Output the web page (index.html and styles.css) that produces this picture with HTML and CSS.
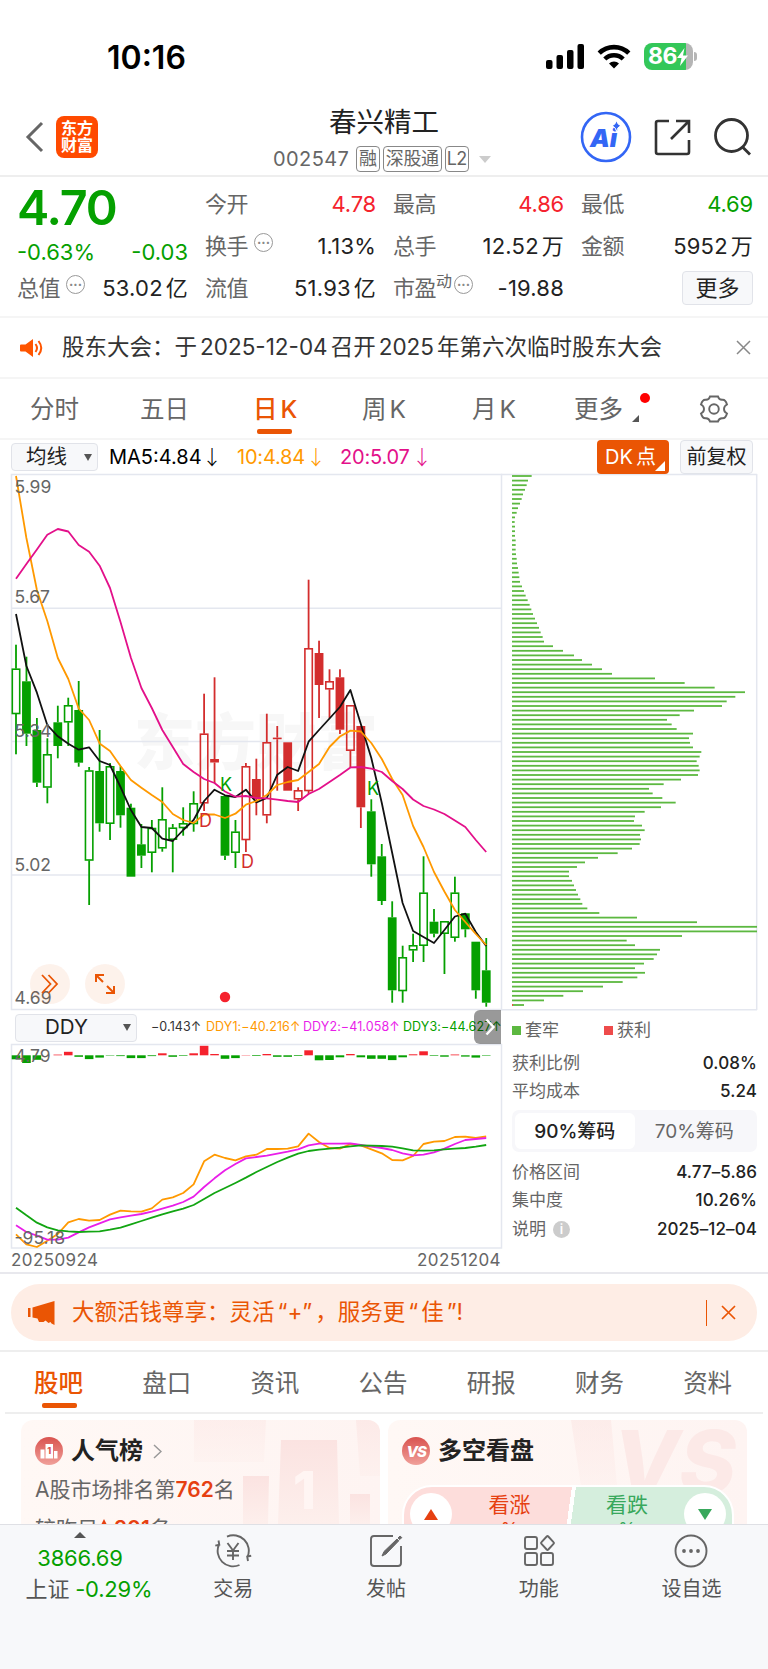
FILE: index.html
```html
<!DOCTYPE html>
<html lang="zh-CN">

<head>
  <meta charset="utf-8">
  <title>春兴精工 002547</title>
  <link rel="stylesheet" href="styles.css">
</head>

<body>
  <div class="status">
    <span class="time">10:16</span>
    <div class="status-icons">
      <svg class="signal" width="39" height="25" viewBox="0 0 39 25">
        <rect x="0" y="16" width="6.5" height="9" rx="2" />
        <rect x="10.5" y="11" width="6.5" height="14" rx="2" />
        <rect x="21" y="6" width="6.5" height="19" rx="2" />
        <rect x="31.5" y="0" width="6.5" height="25" rx="2" />
      </svg>
      <svg class="wifi" width="34" height="25" viewBox="0 0 34 25">
        <path d="M2.2 9.2a21 21 0 0 1 29.6 0" fill="none" stroke="#000" stroke-width="4.6" />
        <path d="M7.8 15a13 13 0 0 1 18.4 0" fill="none" stroke="#000" stroke-width="4.4" />
        <path d="M17 24.5l-5-5a7 7 0 0 1 10 0z" />
      </svg>
      <div class="battery">
        <span>86</span>
        <svg width="11" height="18" viewBox="0 0 11 18"><path d="M7.5 0L0 10h4.5L3 18l8-10.5H6z" fill="#fff" /></svg>
      </div>
      <i class="nub"></i>
    </div>
  </div>

  <div class="header">
    <div class="left">
      <svg width="20" height="32" viewBox="0 0 20 32"><path d="M17 2L3 16l14 14" fill="none" stroke="#666" stroke-width="3" /></svg>
      <div class="logo">东方<br>财富</div>
    </div>
    <div class="stock">
      <h1>春兴精工</h1>
      <div class="code">
        <span class="num">002547</span>
        <span class="tag">融</span>
        <span class="tag">深股通</span>
        <span class="tag">L2</span>
        <i class="caret"></i>
      </div>
    </div>
    <div class="right">
      <svg width="52" height="52" viewBox="0 0 52 52">
        <circle cx="26" cy="26" r="24" fill="#fff" stroke="#3366f5" stroke-width="2.6" />
        <text x="10" y="35.5" class="ai">Ai</text>
        <path d="M36.5 9.5q.8 4 4.5 5.3q-3.7 1.3-4.5 5.3q-.8-4-4.500-5.300q3.700-1.300 4.500-5.300z" fill="#3366f5" stroke="#fff" stroke-width="1" />
      </svg>
      <svg class="share" width="38" height="38" viewBox="0 0 38 38" fill="none" stroke="#333" stroke-width="2.6">
        <path d="M15 2H4q-2 0-2 2v29q0 2 2 2h29q2 0 2-2V21M22 2h13v12M35 2L17 20" />
      </svg>
      <svg class="search" width="40" height="40" viewBox="0 0 40 40" fill="none" stroke="#333" stroke-width="2.8">
        <circle cx="18.5" cy="18.5" r="16" />
        <path d="M29.500 30l7.500 7.500" />
      </svg>
    </div>
  </div>

  <div class="quote">
    <div class="col main">
      <div class="price">4.70</div>
      <div class="row change down"><span>-0.63%</span><span>-0.03</span></div>
      <div class="row"><label>总值</label><i class="more-dot">···</i><b>53.02<u>亿</u></b></div>
    </div>
    <div class="col">
      <div class="row"><label>今开</label><b class="up">4.78</b></div>
      <div class="row"><label>换手</label><i class="more-dot">···</i><b>1.13%</b></div>
      <div class="row"><label>流值</label><b>51.93<u>亿</u></b></div>
    </div>
    <div class="col">
      <div class="row"><label>最高</label><b class="up">4.86</b></div>
      <div class="row"><label>总手</label><b>12.52<u>万</u></b></div>
      <div class="row"><label>市盈</label><sup>动</sup><i class="more-dot tight">···</i><b>-19.88</b></div>
    </div>
    <div class="col">
      <div class="row"><label>最低</label><b class="down">4.69</b></div>
      <div class="row"><label>金额</label><b>5952<u>万</u></b></div>
      <div class="row"><button class="btn more">更多</button></div>
    </div>
  </div>

  <div class="news">
    <svg width="24" height="20" viewBox="0 0 24 20">
      <path d="M1 6.500h4.500L13 1v18l-7.500-5.500H1q-1 0-1-1v-5q0-1 1-1z" fill="#ff5500" />
      <path d="M15.500 6q3 4 0 8M18.500 3q5.500 7 0 14" fill="none" stroke="#ff5500" stroke-width="2" />
    </svg>
    <p>股东大会：于<em>2025-12-04</em>召开<em>2025</em>年第六次临时股东大会</p>
    <svg class="close" width="15" height="15" viewBox="0 0 15 15"><path d="M1 1l13 13M14 1L1 14" stroke="#888" stroke-width="1.5" /></svg>
  </div>

  <div class="periods">
    <span>分时</span>
    <span>五日</span>
    <span class="active">日<em>K</em></span>
    <span>周<em>K</em></span>
    <span>月<em>K</em></span>
    <span class="more-tab">更多<i class="corner"></i><i class="red-dot"></i></span>
    <svg width="30" height="30" viewBox="0 0 30 30" fill="none" stroke="#666" stroke-width="1.9">
      <path d="M11 2.500h8q1 3.500 4.500 3.200q3-.3 4.500 4.800q-3 1.500-3 4.500t3 4.500q-1.500 5.100-4.500 4.800q-3.500-.3-4.500 3.200h-8q-1-3.500-4.500-3.200q-3 .3-4.500-4.800q3-1.500 3-4.500t-3-4.500q1.500-5.100 4.500-4.800q3.500 .3 4.500-3.200z" />
      <circle cx="15" cy="15" r="4.8" />
    </svg>
  </div>

  <div class="ma-bar">
    <div class="btn select">均线<i class="arrow"></i></div>
    <span class="ma ma5">MA5:4.84<i>↓</i></span>
    <span class="ma ma10">10:4.84<i>↓</i></span>
    <span class="ma ma20">20:5.07<i>↓</i></span>
    <div class="btn dk">DK<em>点</em></div>
    <div class="btn fq">前复权</div>
  </div>

  <div class="charts">
    <div class="kline">
      <svg id="kline" width="491" height="536" viewBox="11 474 491 536"></svg>
      <div class="chart-tools">
        <span class="tool"><svg width="18" height="20" viewBox="0 0 18 20" fill="none" stroke="#ea5504" stroke-width="1.8"><path d="M1 1l8.500 9L1 19M7.500 1l8.500 9l-8.500 9" /></svg></span>
        <span class="tool"><svg width="20" height="20" viewBox="0 0 20 20" fill="none" stroke="#ea5504" stroke-width="2"><path d="M1 8V1h8M1 1l7 7M19 12v7h-8M19 19l-7-7" /></svg></span>
      </div>
      <div class="ddy-bar">
        <div class="btn select ddy">DDY<i class="arrow"></i></div>
        <span class="v0">−0.143<i>↑</i></span>
        <span class="v1">DDY1:−40.216<i>↑</i></span>
        <span class="v2">DDY2:−41.058<i>↑</i></span>
        <span class="v3">DDY3:−44.627<i>↑</i></span>
        <div class="next"><svg width="10" height="18" viewBox="0 0 10 18"><path d="M1.500 1.500L8.500 9l-7 7.500" fill="none" stroke="#fff" stroke-width="2.4" /></svg></div>
      </div>
      <svg id="ddy" width="491" height="205" viewBox="11 1044 491 205"></svg>
      <div class="dates"><span>20250924</span><span>20251204</span></div>
    </div>

    <div class="chips">
      <svg id="chips" width="257" height="536" viewBox="501 474 257 536"></svg>
      <div class="chip-info">
        <div class="legend"><i class="sq green"></i>套牢<i class="sq red"></i>获利</div>
        <div class="line l1"><span>获利比例</span><b>0.08%</b></div>
        <div class="line l2"><span>平均成本</span><b>5.24</b></div>
        <div class="toggle"><span class="on">90%筹码</span><span>70%筹码</span></div>
        <div class="line l3"><span>价格区间</span><b>4.77–5.86</b></div>
        <div class="line l4"><span>集中度</span><b>10.26%</b></div>
        <div class="line l5"><span>说明</span><i class="info">i</i><b>2025–12–04</b></div>
      </div>
    </div>
  </div>

  <div class="banner-wrap">
    <div class="banner">
      <svg width="27" height="24" viewBox="0 0 27 24" fill="#ea5504">
        <path d="M0 7h2.500v9H0zM4.500 6.500L26.500 0v24l-3-1.500-1-1.500-2 1-3-2.500-2 1.500H11l-1.500-3.500-5-1z" />
      </svg>
      <p>大额活钱尊享：灵活<em>“+”</em>，服务更<em>“</em>佳<em>”!</em></p>
      <i class="bar"></i>
      <svg width="15" height="15" viewBox="0 0 15 15"><path d="M1 1l13 13M14 1L1 14" stroke="#ea5504" stroke-width="1.7" /></svg>
    </div>
  </div>

  <div class="sections">
    <span class="active">股吧</span>
    <span>盘口</span>
    <span>资讯</span>
    <span>公告</span>
    <span>研报</span>
    <span>财务</span>
    <span>资料</span>
  </div>

  <div class="cards">
    <div class="card">
      <svg class="deco" width="190" height="104" viewBox="0 0 190 104">
        <defs>
          <linearGradient id="fade" x1="0" y1="0" x2="0" y2="1">
            <stop offset="0" stop-color="#fbe3e1" />
            <stop offset="1" stop-color="#fdefec" />
          </linearGradient>
        </defs>
        <g fill="url(#fade)">
          <path d="M4 0h72l-2 42H4z" opacity=".4" />
          <path d="M91 20h56l2 84H88z" />
          <path d="M53 56h26l-1 48H53z" />
          <path d="M160 74h20v30h-20z" />
          <path d="M166 0h24v56h-20z" opacity=".6" />
        </g>
        <text x="103" y="89" class="deco-one">1</text>
      </svg>
      <div class="card-head">
        <svg width="28" height="28" viewBox="0 0 28 28">
          <defs>
            <linearGradient id="badge" x1="0" y1="0" x2="0" y2="1">
              <stop offset="0" stop-color="#d9534f" />
              <stop offset="1" stop-color="#f0a09a" />
            </linearGradient>
          </defs>
          <circle cx="14" cy="14" r="14" fill="url(#badge)" />
          <path d="M5.500 12.500h4v9h-4zM10.500 7h7.500v14.500h-7.500zM19 14h3.500v7.500H19z" fill="#fff" />
          <text x="12.3" y="17" class="badge-one">1</text>
        </svg>
        <h2>人气榜</h2>
        <svg class="chev" width="9" height="15" viewBox="0 0 9 15"><path d="M1 1l7 6.500L1 14" fill="none" stroke="#999" stroke-width="1.5" /></svg>
      </div>
      <p>A股市场排名第<b>762</b>名</p>
      <p class="second">较昨日<i class="tri"></i><b>201</b>名</p>
    </div>

    <div class="card">
      <svg class="deco" width="180" height="104" viewBox="0 0 180 104">
        <path d="M4 0h40l6 66H14z" fill="url(#fade)" opacity=".5" />
        <text x="46" y="73" class="deco-vs">VS</text>
      </svg>
      <div class="card-head">
        <svg width="28" height="28" viewBox="0 0 28 28">
          <circle cx="14" cy="14" r="14" fill="url(#badge)" />
          <text x="4.5" y="20" class="badge-vs">VS</text>
        </svg>
        <h2>多空看盘</h2>
      </div>
      <div class="vote">
        <div class="rise"><span class="knob"><i class="tri"></i></span><div>看涨<small>%</small></div></div>
        <div class="fall"><div>看跌<small>%</small></div><span class="knob"><i class="tri"></i></span></div>
      </div>
    </div>
  </div>

  <div class="nav">
    <div class="index">
      <i class="tri"></i>
      <span class="down">3866.69</span>
      <span class="name">上证 <em class="down">-0.29%</em></span>
    </div>
    <div class="item">
      <svg width="38" height="34" viewBox="0 0 38 34" fill="none" stroke="#666" stroke-width="1.9">
        <path d="M13 2.600A15.500 15.500 0 0 1 33.500 23M34 27l-.8-4.500l4-.8M25.500 31A15.500 15.500 0 0 1 5 10.500M4.500 6.500l.8 4.300l-4 .8" />
        <path d="M13.500 9l5.500 7.500L24.500 9M19 16.500V26M13 17h12M13 21.500h12" />
      </svg>
      <span>交易</span>
    </div>
    <div class="item">
      <svg width="34" height="34" viewBox="0 0 34 34" fill="none" stroke="#666" stroke-width="1.9">
        <path d="M24 2H5Q2 2 2 5v24q0 3 3 3h24q3 0 3-3V12" />
        <path d="M13 22l2-4.500L28 5l1.800 1.800L17 20zM29 4l2-2l1.800 1.600l-2 2z" fill="#666" stroke-width="1" />
      </svg>
      <span>发帖</span>
    </div>
    <div class="item">
      <svg width="32" height="34" viewBox="0 0 32 34" fill="none" stroke="#666" stroke-width="1.9">
        <rect x="2" y="3" width="12" height="12" rx="2" />
        <rect x="2" y="19" width="12" height="12" rx="2" />
        <rect x="18" y="19" width="12" height="12" rx="2" />
        <path d="M23.700 2.500q.8-.8 1.600 0l5.200 5.700q.8 .8 0 1.600l-5.200 5.700q-.8 .8-1.600 0l-5.200-5.700q-.8-.8 0-1.600z" />
      </svg>
      <span>功能</span>
    </div>
    <div class="item">
      <svg width="34" height="34" viewBox="0 0 34 34">
        <circle cx="17" cy="17" r="15.5" fill="none" stroke="#666" stroke-width="1.9" />
        <g fill="#666"><circle cx="10" cy="17" r="1.9" /><circle cx="17" cy="17" r="1.9" /><circle cx="24" cy="17" r="1.9" /></g>
      </svg>
      <span>设自选</span>
    </div>
  </div>

  <script src="chart.js"></script>
</body>

</html>
```
FILE: styles.css
```css
* {
  box-sizing: border-box;
}

body {
  margin: 0;
  width: 768px;
  height: 1669px;
  overflow: hidden;
  background: #fff;
  color: #333;
  font-family: Inter, "Noto Sans CJK SC", sans-serif;
  font-size: 22px;
  line-height: 1;
  white-space: nowrap;
}

h1, h2, p {
  margin: 0;
  font-weight: 400;
}

i, em, u {
  font-style: normal;
  text-decoration: none;
}

svg {
  display: block;
  flex: none;
}

.up {
  color: #f5222d !important;
}

.down {
  color: #05a000 !important;
}

.btn {
  display: flex;
  align-items: center;
  justify-content: center;
  flex: none;
  background: #f7f8fa;
  border: 1px solid #e1e3e9;
  border-radius: 4px;
  color: #222;
  font-family: inherit;
  padding: 0;
  line-height: 1;
}

/* status bar */
.status {
  height: 96px;
  display: flex;
  justify-content: space-between;
  padding: 43px 71px 0 107px;
}

.time {
  font-size: 32px;
  font-weight: 600;
  color: #000;
  line-height: 29px;
}

.status-icons {
  display: flex;
  align-items: center;
  height: 27px;
}

.wifi {
  margin: 0 13px 0 12px;
}

.battery {
  width: 49px;
  height: 27px;
  border-radius: 8px;
  background: linear-gradient(90deg, #34c759 86%, #b5b5b5 86%);
  display: flex;
  align-items: center;
  padding-left: 4px;
  color: #fff;
  font-size: 23px;
  font-weight: 700;
  letter-spacing: -0.5px;
}

.nub {
  width: 3px;
  height: 9px;
  margin-left: 1px;
  border-radius: 0 3px 3px 0;
  background: #b5b5b5;
}

/* header */
.header {
  height: 81px;
  display: grid;
  grid-template-columns: 1fr 240px 1fr;
  border-bottom: 2px solid #eee;
}

.left {
  display: flex;
  align-items: center;
  padding: 2px 0 0 25px;
}

.logo {
  width: 42px;
  height: 42px;
  margin-left: 11px;
  border-radius: 8px;
  background: #ff4a00;
  color: #fff;
  font-size: 16px;
  font-weight: 700;
  line-height: 17px;
  text-align: center;
  padding-top: 4px;
}

.stock h1 {
  font-size: 27.5px;
  line-height: 27px;
  color: #222;
  text-align: center;
  margin-top: 13px;
}

.code {
  display: flex;
  align-items: center;
  margin: 9px 0 0 9px;
  height: 28px;
  color: #666;
  font-size: 20px;
}

.code .num {
  width: 83px;
  letter-spacing: 0.4px;
}

.tag {
  border: 1.5px solid #888;
  border-radius: 4px;
  font-size: 18px;
  height: 26px;
  line-height: 23px;
  padding: 0 2px;
  margin-right: 3px;
  letter-spacing: -0.3px;
}

.tag:nth-child(4) {
  width: 24px;
  padding: 0 1px;
  letter-spacing: -0.8px;
}

.caret {
  margin-left: 7px;
  border: 6px solid transparent;
  border-top: 7px solid #ccc;
  border-bottom: 0;
}

.right {
  display: flex;
  align-items: center;
  justify-content: flex-end;
  padding: 2px 17px 0 0;
}

.ai {
  font: italic 900 25px Inter, sans-serif;
  fill: #3366f5;
}

.share {
  margin: 2px 21px 0 22px;
}

.search {
  margin-right: -2px;
}

/* quote */
.quote {
  height: 141px;
  display: grid;
  grid-template-columns: 171px 171px 171px 172px;
  column-gap: 17px;
  padding: 6px 0 0 17px;
  border-bottom: 2px solid #f5f5f5;
}

.row {
  display: flex;
  align-items: center;
  height: 42px;
}

.row b {
  margin-left: auto;
  font-weight: 400;
  color: #222;
  letter-spacing: 0.2px;
}

.row .up,
.row .down {
  letter-spacing: -0.2px;
}

.row u {
  margin-left: 3px;
}

.row label {
  color: #666;
  letter-spacing: -0.5px;
}

.price {
  height: 48px;
  color: #05a000;
  font-size: 48.5px;
  font-weight: 600;
  line-height: 49px;
  letter-spacing: -1.2px;
}

.change {
  justify-content: space-between;
  height: 42px;
}

.main .row:last-child {
  height: 30px;
}

.row sup {
  font-size: 16px;
  color: #666;
  line-height: 1;
  align-self: flex-start;
  margin-top: 6px;
}

.more-dot {
  width: 19px;
  height: 19px;
  margin: -8px 0 0 6px;
  border: 1.5px solid #999;
  border-radius: 50%;
  color: #888;
  font-size: 13px;
  font-weight: 700;
  line-height: 16px;
  text-align: center;
  letter-spacing: 0;
}

.more-dot.tight {
  margin-left: 2px;
}

.more {
  width: 71px;
  height: 34px;
  margin-left: auto;
  font-size: 22px;
}

/* news */
.news {
  height: 61px;
  display: flex;
  align-items: center;
  padding: 0 17px 0 20px;
  border-bottom: 2px solid #f5f5f5;
}

.news p {
  margin-left: 18px;
  font-size: 22.5px;
}

.news em {
  margin: 0 3px;
}

.close {
  margin-left: auto;
}

/* period tabs */
.periods {
  height: 61px;
  display: flex;
  align-items: center;
  padding: 1px 0 0 30px;
  border-bottom: 2px solid #f5f5f5;
  color: #666;
  font-size: 24.5px;
}

.periods span {
  width: 110px;
  flex: none;
}

.periods em {
  margin-left: 3px;
}

.periods .active {
  color: #ea5504;
  font-weight: 500;
  position: relative;
}

.periods span:nth-child(3) {
  margin-left: 3px;
}

.periods span:nth-child(4) {
  margin-left: -1px;
}

.periods .more-tab {
  width: 125px;
  margin-left: -8px;
  position: relative;
}

.periods .active::after,
.sections .active::after {
  content: "";
  position: absolute;
  left: 4px;
  bottom: -13px;
  width: 35px;
  height: 5px;
  border-radius: 2px;
  background: #ea5504;
}

.corner {
  position: absolute;
  left: 58px;
  bottom: -1px;
  border-left: 7px solid transparent;
  border-bottom: 7px solid #555;
}

.red-dot {
  position: absolute;
  left: 66px;
  top: -4px;
  width: 10px;
  height: 10px;
  border-radius: 50%;
  background: #f00;
}

/* moving averages */
.ma-bar {
  height: 34px;
  display: flex;
  align-items: center;
  padding: 0 15px 0 11px;
  font-size: 20px;
}

.select {
  width: 87px;
  height: 28px;
  font-size: 20.5px;
  justify-content: flex-end;
  padding-right: 5px;
}

.arrow {
  margin-left: 17px;
  border: 4px solid transparent;
  border-top: 7px solid #555;
  border-bottom: 0;
}

.ma {
  display: flex;
  justify-content: space-between;
}

.ma i {
  width: 20px;
  margin-right: -4px;
  font-family: "Noto Sans CJK SC", sans-serif;
  font-weight: 300;
}

.ma5 {
  color: #000;
  margin-left: 11px;
  width: 109px;
}

.ma10 {
  color: #ff9900;
  margin-left: 19px;
  width: 85px;
  letter-spacing: -0.2px;
}

.ma20 {
  color: #e3108a;
  margin-left: 18px;
  width: 88px;
  letter-spacing: -0.2px;
}

.dk {
  position: relative;
  width: 72px;
  height: 34px;
  margin-left: auto;
  padding-right: 5px;
  border: 0;
  background: #ea5504;
  color: #fff;
}

.dk em {
  margin-left: 3px;
}

.dk::after {
  content: "";
  position: absolute;
  right: 4px;
  bottom: 3px;
  border-left: 10px solid transparent;
  border-bottom: 10px solid #fff;
}

.fq {
  width: 73px;
  height: 34px;
  margin-left: 11px;
}

/* charts */
.charts {
  height: 800px;
  display: flex;
  padding-left: 11px;
  border-bottom: 2px solid #e8e8ed;
}

.kline {
  position: relative;
  width: 490px;
}

.kline svg,
.chips > svg {
  overflow: visible;
}

.grid {
  stroke: #e4e7ef;
  stroke-width: 1.5;
  fill: none;
}

.axis {
  font-size: 17.5px;
  fill: #666;
}

.mark {
  font-size: 18px;
}

.wm {
  font-size: 61px;
  font-weight: 800;
  fill: #f7f7f7;
}

.chart-tools {
  position: absolute;
  left: 19px;
  top: 490px;
  display: flex;
  gap: 15px;
}

.tool {
  width: 40px;
  height: 40px;
  border-radius: 50%;
  background: rgba(234, 85, 4, 0.08);
  display: flex;
  align-items: center;
  justify-content: center;
}

.ddy-bar {
  position: relative;
  height: 34px;
  display: flex;
  align-items: center;
  padding: 1px 0 0 4px;
  font-size: 12.5px;
  letter-spacing: 0.1px;
}

.ddy-bar span {
  display: flex;
  justify-content: space-between;
  flex: none;
}

.ddy {
  width: 122px;
}

.ddy .arrow {
  margin-left: 35px;
}

.v0 {
  width: 48px;
  margin-left: 14px;
}

.v1 {
  width: 91px;
  margin-left: 7px;
  color: #ff9900;
}

.v2 {
  width: 94px;
  margin-left: 6px;
  color: #e91ee9;
}

.v3 {
  width: 95px;
  margin-left: 6px;
  color: #05a000;
}

.next {
  position: absolute;
  right: 0;
  top: 0;
  width: 27px;
  height: 34px;
  border-radius: 6px 0 0 6px;
  background: rgba(0, 0, 0, 0.4);
  display: flex;
  align-items: center;
  justify-content: center;
  padding-left: 4px;
}

.dates {
  display: flex;
  justify-content: space-between;
  padding-top: 3px;
  font-size: 17px;
  line-height: 17px;
  color: #666;
  letter-spacing: 0.4px;
}

.chips {
  width: 257px;
}

.chip-info {
  padding: 11px 1px 0 11px;
  font-size: 17px;
  color: #666;
}

.legend {
  display: flex;
  align-items: center;
  height: 18px;
}

.sq {
  width: 9px;
  height: 9px;
  margin-right: 4px;
}

.sq.green {
  background: #5cb840;
}

.sq.red {
  background: #ee4b4b;
  margin-left: 45px;
}

.line {
  display: flex;
  align-items: center;
  height: 27px;
}

.line b {
  margin-left: auto;
  font-weight: 500;
  color: #222;
  letter-spacing: 0.1px;
}

.l1 {
  margin-top: 11px;
}

.l2 {
  margin-top: 1px;
}

.toggle {
  display: flex;
  height: 42px;
  margin: 5px 0 7px;
  padding: 3px;
  border-radius: 7px;
  background: #f7f7fa;
  font-size: 19px;
}

.toggle span {
  flex: 1;
  display: flex;
  align-items: center;
  justify-content: center;
  border-radius: 6px;
}

.toggle .on {
  background: #fff;
  color: #222;
  font-weight: 500;
}

.l4 {
  margin-top: 1px;
}

.l5 {
  margin-top: 2px;
}

.info {
  width: 17px;
  height: 17px;
  margin-left: 7px;
  border-radius: 50%;
  background: #ccc;
  color: #fff;
  font-size: 13px;
  font-weight: 600;
  line-height: 17px;
  text-align: center;
}

/* banner */
.banner-wrap {
  height: 78px;
  padding: 10px 11px 0;
  border-bottom: 2px solid #eee;
}

.banner {
  height: 57px;
  display: flex;
  align-items: center;
  padding: 0 21px 0 17px;
  border-radius: 29px;
  background: #feede5;
  color: #ea5504;
  font-size: 22.5px;
}

.banner p {
  margin-left: 17px;
}

.banner em {
  margin: 0 3px;
}

.bar {
  width: 1px;
  height: 26px;
  margin: 0 14px 0 auto;
  background: #ea5504;
}

/* section tabs */
.sections {
  height: 62px;
  margin: 0 5px;
  padding: 3px 0 0 29px;
  display: flex;
  align-items: center;
  border-bottom: 2px solid #eee;
  color: #666;
  font-size: 24.5px;
}

.sections span {
  width: 108.2px;
  flex: none;
}

.sections .active {
  position: relative;
  color: #ea5504;
  font-weight: 500;
}

.sections .active::after {
  left: 8px;
  bottom: -12px;
}

/* cards */
.cards {
  height: 110px;
  overflow: hidden;
  display: flex;
  gap: 8px;
  padding: 6px 21px 0;
}

.card {
  position: relative;
  width: 359px;
  height: 160px;
  flex: none;
  padding: 17px 14px;
  border-radius: 12px;
  background: linear-gradient(90deg, #fff8f5, #fef4f2);
  overflow: hidden;
}

.deco {
  position: absolute;
  right: 0;
  top: 0;
}

.deco-one {
  font: 800 52px Inter, sans-serif;
  fill: #fff5f3;
}

.deco-vs {
  font: italic 800 86px Inter, sans-serif;
  fill: #fce9e7;
}

.badge-one {
  font: 800 9px Inter, sans-serif;
  fill: #d9534f;
}

.badge-vs {
  font: italic 800 15px Inter, sans-serif;
  fill: #fff;
  letter-spacing: -1px;
}

.card-head {
  position: relative;
  display: flex;
  align-items: center;
  height: 28px;
}

.card-head h2 {
  margin: 0 10px 0 8px;
  font-size: 24px;
  font-weight: 600;
  color: #222;
}

.card p {
  position: relative;
  margin-top: 14px;
  font-size: 21px;
  line-height: 22px;
  color: #666;
}

.card p b {
  color: #e64011;
  font-weight: 600;
}

.card .second {
  margin-top: 17px;
}

.second .tri {
  display: inline-block;
  vertical-align: 5px;
  margin-right: 4px;
  border: 6px solid transparent;
  border-top: 0;
  border-bottom: 12px solid #e64011;
}

.vote {
  position: relative;
  display: flex;
  width: 332px;
  height: 60px;
  margin: 20px 0 0;
  border: 2px solid #fff;
  border-radius: 30px 30px 0 0;
  background: linear-gradient(98deg, #fddddb 50%, #fff 50%, #fff 51.2%, #d5eedd 51.2%);
  color: #e64011;
  font-size: 21px;
}

.vote > div {
  width: 50%;
  display: flex;
  padding: 6px 6px;
}

.vote > div > div {
  flex: 1;
  text-align: center;
  padding: 1px 0 0 5px;
}

.vote small {
  display: block;
  margin-top: 6px;
  font-size: 18px;
}

.vote .fall {
  color: #38a85c;
}

.vote .fall > div {
  padding: 1px 4px 0 0;
}

.knob {
  width: 42px;
  height: 42px;
  border-radius: 50%;
  background: #fff;
  display: flex;
  align-items: center;
  justify-content: center;
}

.rise .tri {
  border: 7px solid transparent;
  border-top: 0;
  border-bottom: 11px solid #e64011;
}

.fall .tri {
  border: 7px solid transparent;
  border-bottom: 0;
  border-top: 11px solid #38a85c;
}

/* bottom nav */
.nav {
  height: 145px;
  display: flex;
  padding: 7px 0 0 3px;
  border-top: 1px solid #dfe0e5;
  background: #f7f8fa;
  color: #555;
}

.index {
  width: 154px;
  display: flex;
  flex-direction: column;
  align-items: center;
}

.index .tri {
  border: 6px solid transparent;
  border-top: 0;
  border-bottom: 6px solid #555;
}

.index span {
  margin-top: 9px;
  font-size: 22px;
  letter-spacing: -0.2px;
}

.index .name {
  padding-left: 18px;
}

.item {
  width: 152.7px;
  display: flex;
  flex-direction: column;
  align-items: center;
  padding-top: 2px;
}

.item span {
  margin-top: 11px;
  font-size: 20px;
}
```
FILE: chart.js
```js
var GREEN = '#05a000', RED = '#d32d2d';
var X0 = 16, STEP = 10.45;

// side (g/r), filled, high, body top, body bottom, low
var candles = [
  ['g', 0, 644.7, 668.7, 714, 754.3], ['g', 1, 656.7, 681.3, 733.7, 746], ['g', 1, 718, 730, 782.7, 787],
  ['g', 0, 738.3, 754.3, 787.5, 803.3], ['g', 1, 705.7, 722.3, 746, 758.3], ['g', 0, 697.7, 705.3, 722.3, 746],
  ['g', 1, 681, 710, 762.7, 766.7], ['g', 0, 767, 770.5, 860.5, 905], ['g', 1, 730, 771, 823.3, 831.7],
  ['g', 0, 763, 766.3, 823.7, 840], ['g', 1, 766.3, 771, 815.3, 827.7], ['g', 1, 803.7, 807.7, 876.7, 876.7],
  ['g', 1, 824, 844.3, 855.7, 868], ['g', 0, 820, 828, 852.7, 872.3], ['g', 0, 787.3, 819.3, 848.3, 851.7],
  ['g', 0, 824, 827.7, 839.7, 872.3], ['g', 0, 807.3, 823.3, 828, 835.7], ['g', 0, 791.3, 803.3, 824, 831.7],
  ['r', 0, 693.7, 733.7, 803.3, 811], ['r', 1, 677.3, 759, 762.5, 783], ['g', 1, 795, 796, 855.7, 860],
  ['g', 0, 820, 831.7, 852.7, 868], ['r', 0, 763, 766.3, 840, 852], ['r', 1, 758.7, 779, 799, 815.3],
  ['r', 0, 713.7, 742.3, 815.3, 823.3], ['r', 1, 726, 737.6, 739.2, 790.7], ['r', 1, 742.3, 742.3, 790.7, 790.7],
  ['r', 0, 787.3, 790.3, 799.3, 811], ['r', 0, 579.7, 648.3, 791, 794], ['r', 1, 640.7, 653, 685, 718],
  ['r', 0, 669.3, 681.3, 689.3, 718], ['r', 1, 669.3, 677.3, 729.7, 734], ['r', 0, 705.3, 705.3, 750.7, 767.3],
  ['r', 1, 726, 726, 807.3, 828], ['g', 1, 799.3, 811.3, 864.3, 876.7], ['g', 1, 844, 856.3, 901, 905],
  ['g', 1, 901.3, 917.3, 990.3, 1002.7], ['g', 0, 945.7, 957.3, 991, 1002.7], ['g', 0, 933.7, 945.3, 950.3, 962],
  ['g', 0, 856.3, 892.7, 945.7, 962], ['g', 1, 909, 921.7, 933.7, 937.3], ['g', 0, 921.3, 921.3, 933.7, 974],
  ['g', 0, 876.7, 892.7, 937.7, 941.7], ['g', 1, 913.3, 913.3, 929.3, 937.3], ['g', 1, 941.7, 941.7, 990.3, 998.7],
  ['g', 1, 938, 970.3, 1002.7, 1006.7]
];

var ma5 = [614, 666, 692.7, 725, 736.3, 743.7, 749.7, 747.3, 761, 765, 787, 810, 827, 828, 838.7, 841, 830, 820, 801,
  789.7, 795.3, 797, 789.7, 802.3, 798, 774.7, 767, 771, 741.7, 730, 718.5, 707, 690, 724, 758, 803, 853, 903, 931,
  937, 943, 930, 916.5, 913.7, 932, 946];
var ma10 = [476, 538, 590, 621, 658, 679, 708.5, 720, 743.4, 751, 766, 780, 787.7, 795, 802, 814, 820, 823, 814.5,
  814.5, 818, 813.7, 804.7, 801, 795, 785, 782, 780, 772, 764, 747, 736.5, 730.6, 731.5, 743, 759, 779, 795, 826,
  847, 872, 891.5, 910, 922, 934, 945];
var ma20 = [578.7, 564, 549.5, 534.7, 529, 531.5, 545, 551.7, 565.7, 588, 622, 657.7, 688, 708, 730, 747, 764, 772,
  779, 783, 791.5, 796.7, 796, 798, 798.3, 799.7, 801, 802, 794, 789, 782, 775, 767.4, 767, 768.7, 772, 781, 789,
  799.5, 806, 809.5, 814, 820.5, 827, 840, 852];

// DDY columns, up is positive
var cols = [-4, -7.7, -4.5, 0, 0.7, 3.5, -1.5, -3.8, -2.3, -0.4, -0.8, -2.8, -2.8, -0.8, 2, -1.5, -0.6, 2, 9.5, 1.3,
  -3.5, -2.8, 0.3, -0.7, 1.3, -1.5, -1.5, -0.7, 5, -5, -4.7, -2, 1.3, -2, -3.5, -3.5, -4.8, -2, 1, 4, -0.6, -1.4,
  0.8, -1.3, -2.3, -0.5];
// DDY lines, in thirds of a pixel below 1000
var ddy1 = [703, 733, 741, 722, 702, 667, 657, 662, 660, 644, 632, 634, 635, 625, 599, 592, 579, 553, 484, 464, 474,
  481, 469, 464, 447, 447, 446, 439, 401, 426, 444, 446, 432, 436, 448, 460, 480, 481, 468, 432, 425, 423, 411, 410,
  414, 409];
var ddy2 = [676, 696, 707, 719, 719, 713, 697, 682, 670, 658, 652, 647, 642, 635, 626, 617, 606, 590, 561, 535, 511,
  492, 475, 471, 467, 461, 455, 448, 436, 431, 431, 431, 430, 435, 440, 444, 450, 460, 466, 464, 457, 446, 432, 420,
  417, 414];
var ddy3 = [623, 646, 668, 682, 691, 694, 696, 695, 694, 689, 683, 673, 663, 653, 643, 634, 626, 615, 597, 579, 564,
  549, 533, 516, 501, 486, 473, 461, 453, 449, 446, 443, 439, 436, 437, 438, 440, 445, 451, 452, 451, 448, 446, 444,
  440, 435];

// chip distribution, top price first
var chips = [59, 48, 44, 39, 33, 29, 24, 18, 14, 9, 8, 9, 9, 9, 11, 11, 11, 12, 14, 15, 18, 20, 22, 24, 30, 36, 41,
  47, 53, 58, 63, 69, 75, 81, 86, 92, 96, 123, 153, 186, 210, 240, 270, 300, 429, 518, 608, 699, 670, 644, 630, 546,
  503, 465, 479, 494, 543, 531, 534, 543, 568, 563, 554, 560, 563, 558, 507, 455, 411, 422, 451, 491, 447, 398, 369,
  366, 390, 398, 384, 387, 383, 360, 317, 258, 219, 195, 171, 171, 180, 186, 192, 198, 205, 211, 226, 262, 375, 555,
  735, 735, 510, 344, 369, 444, 435, 425, 396, 369, 399, 376, 332, 273, 213, 154, 96, 36];

function x(i) {
  return X0 + i * STEP;
}

function rect(l, t, w, h, fill, extra) {
  return '<rect x="' + l + '" y="' + t + '" width="' + w + '" height="' + h + '" fill="' + fill + '" ' + (extra || '') + '/>';
}

function hline(l, r, y) {
  return '<path class="grid" d="M' + l + ' ' + y + 'H' + r + '"/>';
}

function text(l, y, s, cls, fill) {
  return '<text x="' + l + '" y="' + y + '" class="' + cls + '"' + (fill ? ' fill="' + fill + '"' : '') + '>' + s + '</text>';
}

function line(data, color) {
  var pts = data.map(function(y, i) {
    return x(i).toFixed(1) + ',' + y;
  });
  return '<polyline points="' + pts.join(' ') + '" fill="none" stroke="' + color + '" stroke-width="1.8" stroke-linejoin="round"/>';
}

function drawKline() {
  var s = text(134, 765, '东方财富', 'wm');
  s += '<rect class="grid" x="11.5" y="474.5" width="490" height="535"/>';
  s += hline(11, 501, 608.3) + hline(11, 501, 741.5) + hline(11, 501, 875);
  candles.forEach(function(c, i) {
    var color = c[0] == 'g' ? GREEN : RED;
    s += rect(x(i) - 0.9, c[2], 1.8, c[3] - c[2], color);
    s += rect(x(i) - 0.9, c[4], 1.8, c[5] - c[4], color);
    if (c[1])
      s += rect(x(i) - 4.4, c[3], 8.8, c[4] - c[3], color);
    else
      s += rect(x(i) - 3.7, c[3] + 0.5, 7.4, c[4] - c[3] - 1, 'none', 'stroke="' + color + '" stroke-width="1.6"');
  });
  s += line(ma5, '#111') + line(ma10, '#ff9900') + line(ma20, '#e3108a');
  s += text(220, 791, 'K', 'mark', GREEN) + text(367, 795, 'K', 'mark', GREEN);
  s += text(199, 826.5, 'D', 'mark', RED) + text(241, 867.5, 'D', 'mark', RED);
  s += text(14.5, 493, '5.99', 'axis') + text(14.5, 602.5, '5.67', 'axis') + text(14.5, 736.5, '5.34', 'axis');
  s += text(14.5, 870.5, '5.02', 'axis') + text(14.5, 1004, '4.69', 'axis');
  s += '<circle cx="225" cy="997" r="5.2" fill="#f5222d"/>';
  document.getElementById('kline').innerHTML = s;
}

function drawDdy() {
  var third = function(v) {
    return 1000 + v / 3;
  };
  var s = '<rect class="grid" x="11.5" y="1044.5" width="490" height="203.5"/>';
  cols.forEach(function(v, i) {
    var color = v > 0 ? '#f5222d' : GREEN;
    s += rect(x(i) - 4.3, v > 0 ? 1055.3 - v : 1055.3, 8.6, Math.abs(v), color);
  });
  s += line(ddy1.map(third), '#ff9900') + line(ddy2.map(third), '#e91ee9') + line(ddy3.map(third), '#12a512');
  s += text(14.5, 1061.5, '4.79', 'axis') + text(14.5, 1244, '-95.18', 'axis');
  document.getElementById('ddy').innerHTML = s;
}

function drawChips() {
  var s = hline(501, 757, 474.5) + hline(501, 757, 1009.7) + '<path class="grid" d="M756.7 474V1010"/>';
  chips.forEach(function(w, i) {
    s += rect(512, (475.1 + i * 4.6).toFixed(1), w / 3, 1.8, '#5cb840');
  });
  s += rect(512, 1004, 1, 2, '#ee4b4b');
  document.getElementById('chips').innerHTML = s;
}

drawKline();
drawDdy();
drawChips();
```
